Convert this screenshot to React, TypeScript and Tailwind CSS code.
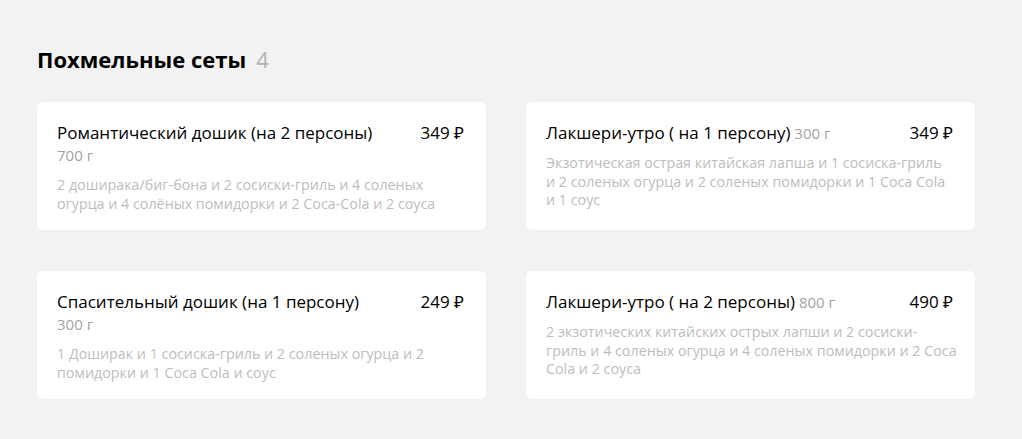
const items = [
  {
    title: 'Романтический дошик (на 2 персоны)',
    weight: '700 г',
    inline: false,
    price: '349 ₽',
    desc: '2 доширака/биг-бона и 2 сосиски-гриль и 4 соленых огурца и 4 солёных помидорки и 2 Coca-Cola и 2 соуса',
  },
  {
    title: 'Лакшери-утро ( на 1 персону)',
    weight: '300 г',
    inline: true,
    price: '349 ₽',
    desc: 'Экзотическая острая китайская лапша и 1 сосиска-гриль и\u00a02 соленых огурца и 2 соленых помидорки и 1 Coca Cola и\u00a01 соус',
  },
  {
    title: 'Спасительный дошик (на 1 персону)',
    weight: '300 г',
    inline: false,
    price: '249 ₽',
    desc: '1 Доширак и 1 сосиска-гриль и 2 соленых огурца и 2 помидорки и 1 Coca Cola и соус',
  },
  {
    title: 'Лакшери-утро ( на 2 персоны)',
    weight: '800 г',
    inline: true,
    price: '490 ₽',
    desc: '2 экзотических китайских острых лапши и 2 сосиски-гриль и 4 соленых огурца и 4 соленых помидорки и 2 Coca Cola и 2 соуса',
  },
];

export default function App() {
  return (
    <div
      className="min-h-[439px] bg-[#f2f2f2] pl-[37px] pt-[45px]"
      style={{ fontFamily: '"Open Sans", "Noto Sans", Arial, sans-serif' }}
    >
      <h2 className="flex items-baseline gap-[10px] text-[22px] leading-[28px] font-bold text-black">
        Похмельные сеты
        <span className="font-normal text-[#b3b3b3]">4</span>
      </h2>

      <div className="mt-[29px] grid w-[938px] grid-cols-2 gap-x-[40px] gap-y-[41px]">
        {items.map((it) => (
          <div key={it.title + it.price} className="rounded-[6px] bg-white pl-[20px] pr-[18px] pt-[20px] pb-[17px]">
            <div className="flex justify-between gap-4">
              <div className="text-[17px] leading-[22px] text-black">
                {it.title}
                {it.inline && (
                  <span className="text-[15px] text-[#a3a3a3]"> {it.weight}</span>
                )}
              </div>
              <div className="shrink-0 pr-[4px] text-[17px] leading-[22px] text-black">
                {it.price}
              </div>
            </div>
            {!it.inline && (
              <div className="text-[15px] leading-[22px] text-[#a3a3a3]">{it.weight}</div>
            )}
            <p className="mt-[10px] text-[14.3px] leading-[18.5px] text-[#bdbdbd]">
              {it.desc}
            </p>
          </div>
        ))}
      </div>
    </div>
  );
}
